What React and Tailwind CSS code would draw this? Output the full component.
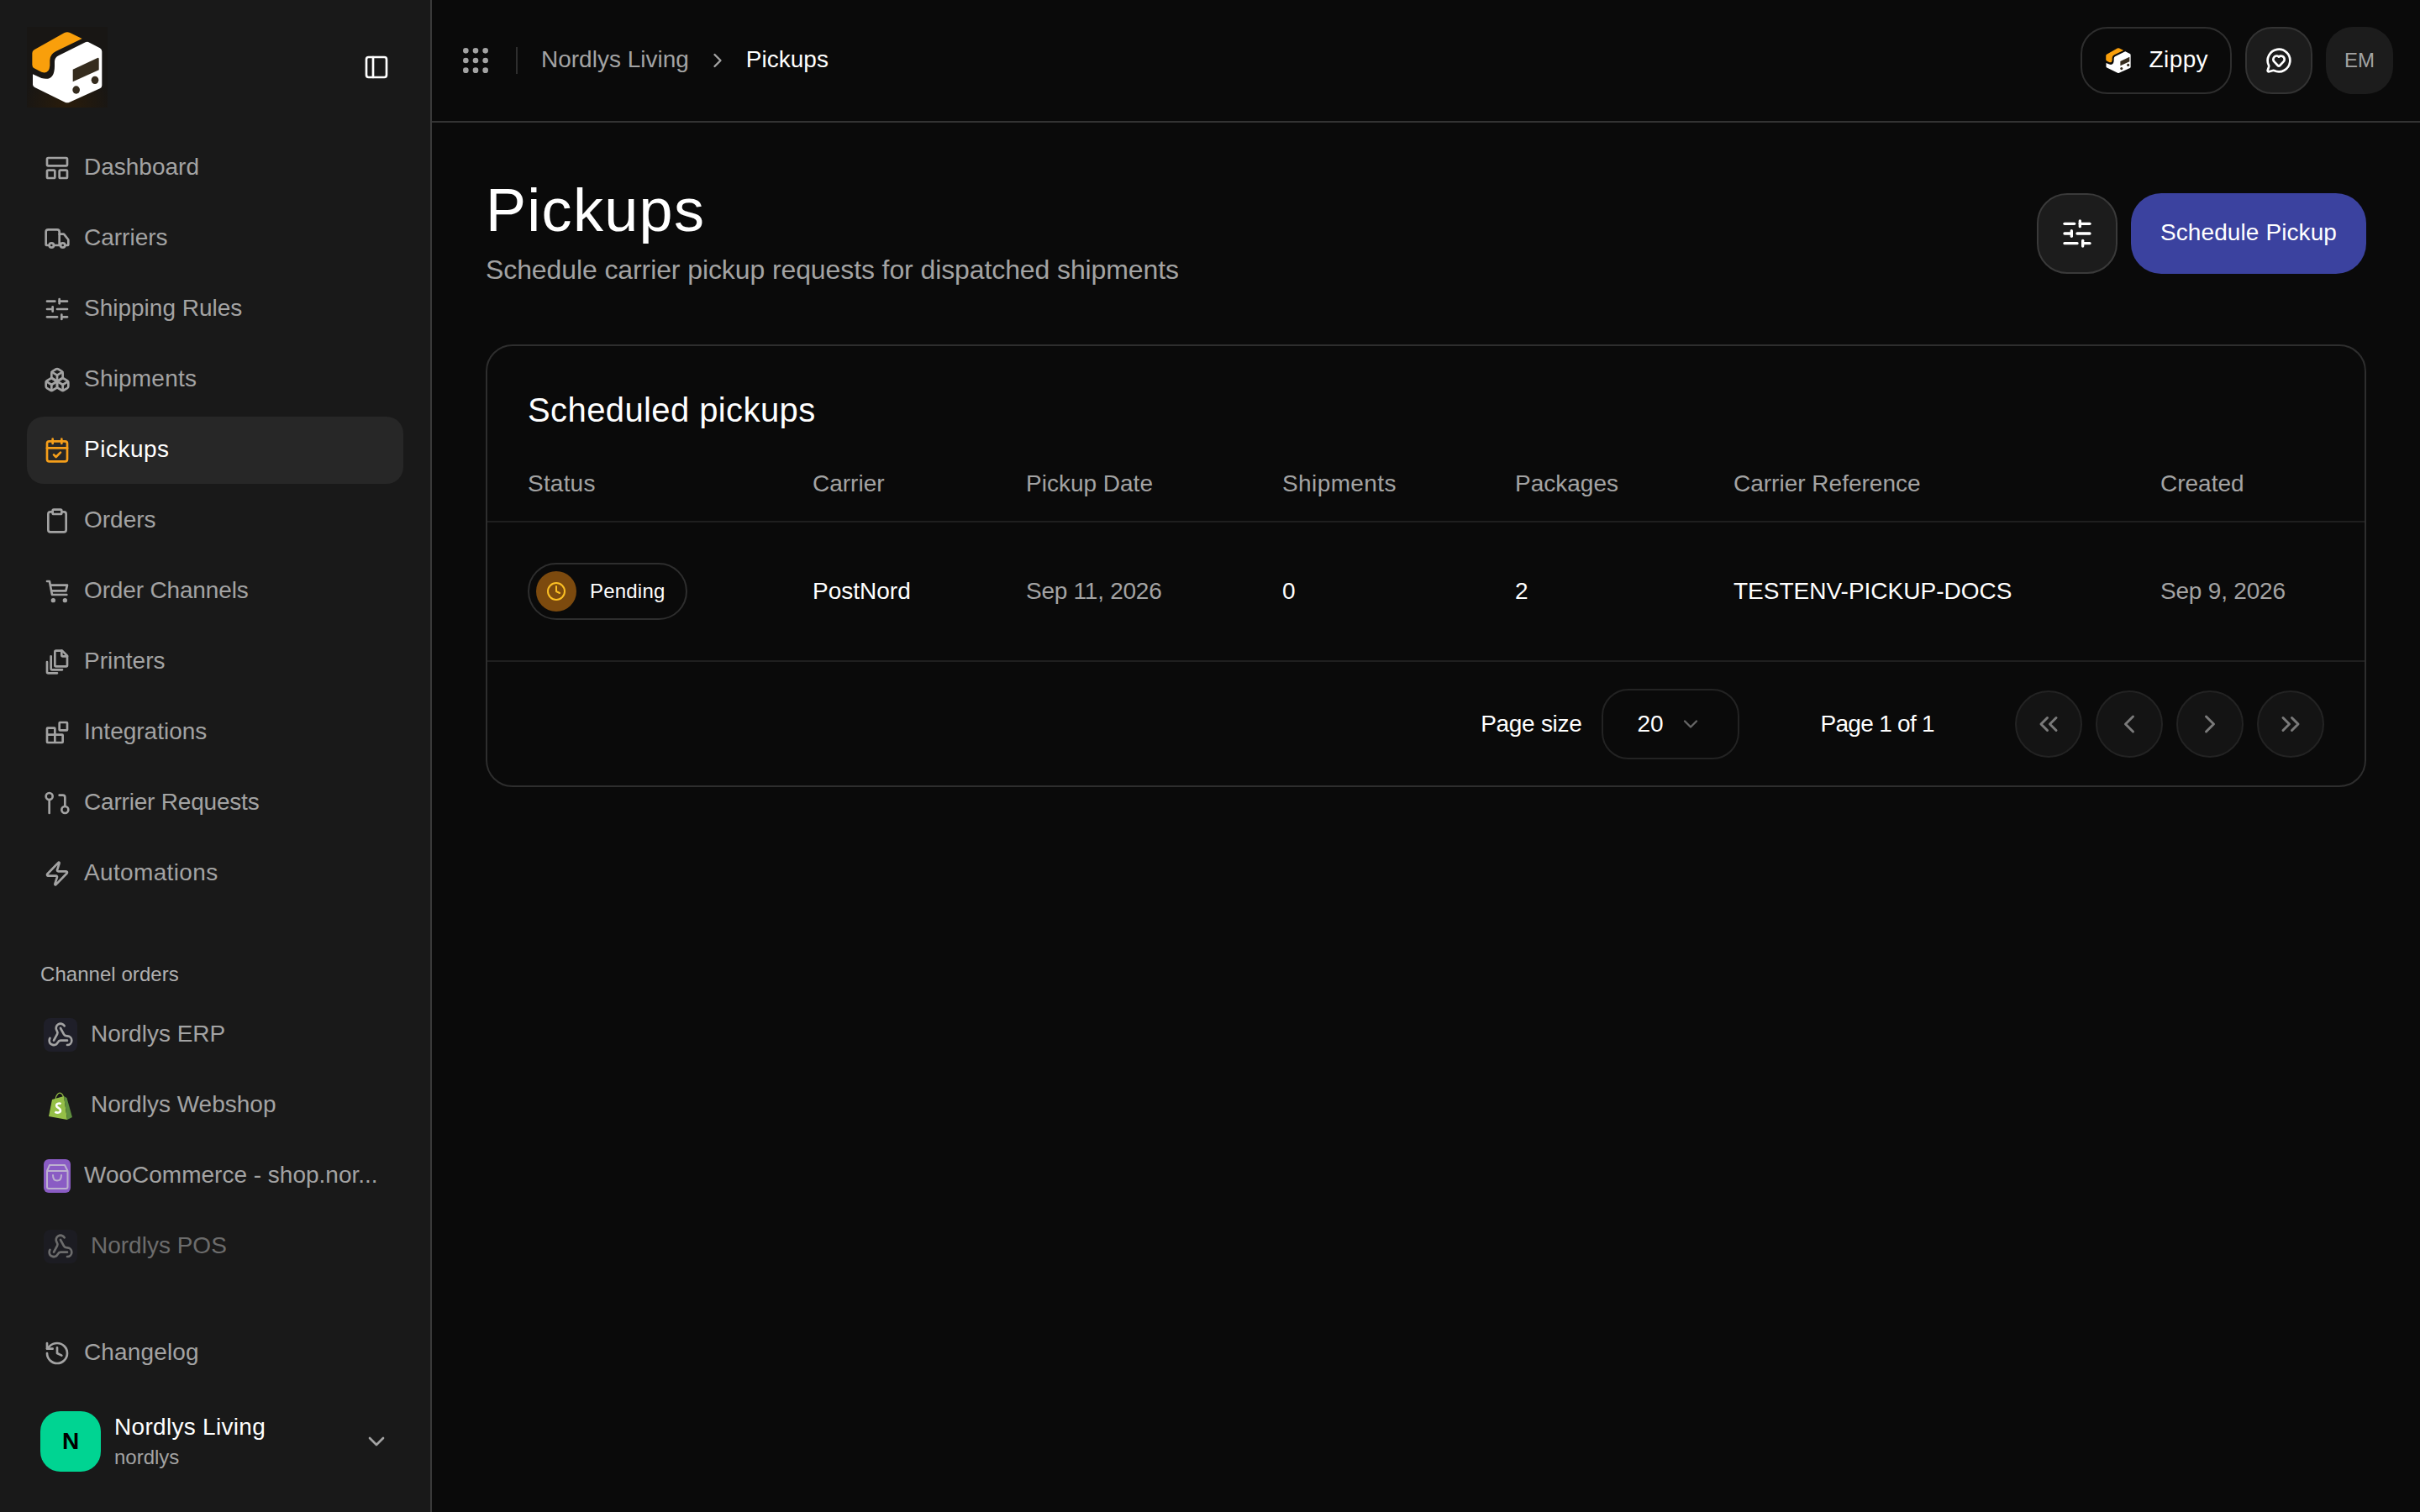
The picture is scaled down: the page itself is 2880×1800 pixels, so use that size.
import React from "react";
import {
  LayoutPanelTop, Truck, SlidersHorizontal, Boxes, CalendarCheck, Clipboard, Zap,
  History, Webhook, ChevronDown, ChevronRight, ChevronLeft, ChevronsLeft, ChevronsRight, Grip, MessageCircleHeart,
  Clock, PanelLeft,
} from "lucide-react";

function Logo({ glow, className }) {
  return (
    <svg viewBox="36 36 288 288" className={className}>
      {glow && (
        <>
          <defs>
            <radialGradient id="glow" cx="50%" cy="100%" r="55%">
              <stop offset="0%" stopColor="#2a1c0a" />
              <stop offset="100%" stopColor="#181614" />
            </radialGradient>
          </defs>
          <rect x="36" y="36" width="288" height="288" fill="url(#glow)" />
        </>
      )}
      <path d="M62 118 L170 57 Q180 52 190 57 L233 78 L140 123 Q118 134 118 155 L118 175 Q115 207 88 197 L62 184 Q55 180 55 172 L55 130 Q55 123 62 118Z" fill="#f99f0b" />
      <path d="M255 90 L297 112 Q304 116 304 124 L304 245 Q304 252 297 256 L188 305 Q180 308 172 305 L64 252 Q57 248 57 242 L57 205 L88 219 Q135 232 135 176 L135 160 Q135 145 150 138 L245 91 Q250 88 255 90Z" fill="#ffffff" />
      <path d="M200 188 L288 147 Q293 145 293 150 L293 190 L200 232Z" fill="#352c1e" />
      <ellipse cx="212" cy="261" rx="13" ry="14" fill="#352c1e" />
      <ellipse cx="279" cy="226" rx="13" ry="14" fill="#352c1e" />
    </svg>
  );
}

function Stroke({ size = 32, strokeWidth = 2, className, children }) {
  return (
    <svg width={size} height={size} viewBox="0 0 24 24" fill="none" stroke="currentColor" strokeWidth={strokeWidth} strokeLinecap="round" strokeLinejoin="round" className={className}>
      {children}
    </svg>
  );
}

function PullHook(props) {
  return (
    <Stroke {...props}>
      <circle cx="5" cy="6" r="3" />
      <path d="M5 9v12" />
      <circle cx="19" cy="18" r="3" />
      <path d="M14 5h3a2 2 0 0 1 2 2v8" />
    </Stroke>
  );
}

function Cart(props) {
  return (
    <Stroke {...props}>
      <path d="M3 3h2.2L7.5 15h13" />
      <path d="M6.3 6.5H21l-1.2 5H7.2" />
      <circle cx="8.5" cy="20" r="1" fill="currentColor" />
      <circle cx="19" cy="20" r="1" fill="currentColor" />
    </Stroke>
  );
}

function FilesIcon(props) {
  return (
    <Stroke {...props}>
      <path d="M11 2h5.5L21 6.5V15a1 1 0 0 1-1 1h-9a1 1 0 0 1-1-1V3a1 1 0 0 1 1-1z" />
      <path d="M16 2v4a1 1 0 0 0 1 1h4" />
      <path d="M6.5 7v11a1 1 0 0 0 1 1h9" />
      <path d="M3 12v9a1 1 0 0 0 1 1h8" />
    </Stroke>
  );
}

function BlocksIcon(props) {
  return (
    <Stroke {...props}>
      <rect x="14" y="3" width="7" height="7" rx="0.5" />
      <path d="M10 21V8.5a.5.5 0 0 0-.5-.5H3.5a.5.5 0 0 0-.5.5v12a.5.5 0 0 0 .5.5h13a.5.5 0 0 0 .5-.5v-6a.5.5 0 0 0-.5-.5H3" />
    </Stroke>
  );
}

function ShopifyBag() {
  return (
    <svg viewBox="0 0 28 33" className="h-[33px] w-[28px]">
      <path d="M8 9 C8.5 3.5 12 0 14.5 1.5 C17 3 17.6 6 17.6 8" fill="none" stroke="#95BF47" strokeWidth="1.3" />
      <path d="M4 9 L18 5 L22 33 L0 29 Z" fill="#95BF47" />
      <path d="M18 5 L21.5 7 L28 30 L22 33 Z" fill="#5E8E3E" />
      <path d="M14.6 14.2 C12 12.6 8.6 14 9.3 16.8 C10 19 14 19.2 14 22 C14 25 10 25.2 7.4 23.6" fill="none" stroke="#ffffff" strokeWidth="2.6" />
    </svg>
  );
}

function WooIcon() {
  return (
    <svg viewBox="0 0 32 40" className="h-[40px] w-[32px] shrink-0">
      <rect width="32" height="40" rx="6" fill="#8a5cc4" />
      <path d="M7 7 H25 L28.5 14 V33 Q28.5 35 26.5 35 H6 Q4 35 4 33 V14 Z M4 14 H28.5" fill="none" stroke="#bcb0cf" strokeWidth="2" strokeLinejoin="round" />
      <path d="M11 19 Q11 25.5 16 25.5 Q21 25.5 21 19" fill="none" stroke="#bcb0cf" strokeWidth="2" strokeLinecap="round" />
    </svg>
  );
}

const nav = [
  ["Dashboard", LayoutPanelTop, ""],
  ["Carriers", Truck, ""],
  ["Shipping Rules", SlidersHorizontal, ""],
  ["Shipments", Boxes, "tracking-[0.2px]"],
  ["Pickups", CalendarCheck, "tracking-[0.5px]", true],
  ["Orders", Clipboard, ""],
  ["Order Channels", Cart, "tracking-[-0.15px]"],
  ["Printers", FilesIcon, ""],
  ["Integrations", BlocksIcon, ""],
  ["Carrier Requests", PullHook, "tracking-[-0.2px]"],
  ["Automations", Zap, "tracking-[0.35px]"],
];

function NavItem({ label, Icon, active, track = "" }) {
  return (
    <div className={"flex h-[80px] items-center gap-[16px] rounded-[20px] px-[20px] text-[28px] " + (active ? "bg-[#272727] text-white" : "text-[#a3a3a3]")}>
      <Icon size={32} strokeWidth={2} className={"shrink-0 " + (active ? "text-[#f59e1a]" : "text-[#a3a3a3]")} />
      <span className={"mb-[2px] " + track}>{label}</span>
    </div>
  );
}

function ChannelIconBox({ children, tint }) {
  return (
    <div className={"flex h-[40px] w-[40px] shrink-0 items-center justify-center rounded-[8px] " + (tint ? "bg-[#1f1f29]" : "")}>{children}</div>
  );
}

function Sidebar() {
  return (
    <aside className="flex h-[1800px] w-[514px] shrink-0 flex-col border-r-2 border-r-[#3a3a3a] bg-[#191919]">
      <div className="flex h-[160px] shrink-0 items-start justify-between pl-[32px] pr-[48px] pt-[32px]">
        <Logo glow className="h-[96px] w-[96px]" />
        <PanelLeft size={32} strokeWidth={2} className="mt-[32px] text-white" />
      </div>
      <nav className="flex flex-col gap-[4px] px-[32px]">
        {nav.map(([label, Icon, track, active]) => (
          <NavItem key={label} label={label} Icon={Icon} active={active} track={track} />
        ))}
      </nav>
      <div className="mt-[58px] px-[48px] text-[24px] leading-[44px] tracking-[0.05px] text-[#b0b0b0]">Channel orders</div>
      <div className="mt-[10px] flex flex-col gap-[4px] px-[32px] text-[28px] text-[#a3a3a3]">
        <div className="flex h-[80px] items-center gap-[16px] px-[20px]">
          <ChannelIconBox tint><Webhook size={32} strokeWidth={2} /></ChannelIconBox>
          <span className="mb-[2px]">Nordlys ERP</span>
        </div>
        <div className="flex h-[80px] items-center gap-[16px] px-[20px]">
          <ChannelIconBox><ShopifyBag /></ChannelIconBox>
          <span className="mb-[2px]">Nordlys Webshop</span>
        </div>
        <div className="flex h-[80px] items-center gap-[16px] px-[20px]">
          <WooIcon />
          <span className="mb-[2px] truncate">WooCommerce - shop.nor...</span>
        </div>
        <div className="flex h-[80px] items-center gap-[16px] px-[20px] opacity-60">
          <ChannelIconBox tint><Webhook size={32} strokeWidth={2} /></ChannelIconBox>
          <span className="mb-[2px]">Nordlys POS</span>
        </div>
      </div>
      <div className="flex-1" />
      <div className="px-[32px]">
        <NavItem label="Changelog" Icon={History} track="tracking-[0.15px]" />
      </div>
      <div className="mb-[48px] mt-[29px] flex items-center pl-[48px] pr-[48px]">
        <div className="flex h-[72px] w-[72px] shrink-0 items-center justify-center rounded-[24px] bg-[#00d492] text-[28px] font-bold text-black">N</div>
        <div className="ml-[16px] flex-1">
          <div className="text-[28px] leading-[38px] tracking-[0.3px] text-white">Nordlys Living</div>
          <div className="text-[24px] leading-[34px] text-[#a3a3a3]">nordlys</div>
        </div>
        <ChevronDown size={32} strokeWidth={2} className="text-[#a3a3a3]" />
      </div>
    </aside>
  );
}

function TopBar() {
  return (
    <header className="flex h-[146px] shrink-0 items-center justify-between border-b-2 border-b-[#333333] px-[32px]">
      <div className="flex items-center text-[28px]">
        <Grip size={40} strokeWidth={2} className="text-[#a3a3a3]" />
        <div className="mx-[28px] h-[32px] w-[2px] bg-[#2e2e2e]" />
        <span className="mb-[2px] text-[#a3a3a3]">Nordlys Living</span>
        <ChevronRight size={28} strokeWidth={2} className="mx-[20px] text-[#a3a3a3]" />
        <span className="mb-[2px] text-white">Pickups</span>
      </div>
      <div className="flex items-center gap-[16px]">
        <div className="flex h-[80px] items-center gap-[20px] rounded-[32px] border-2 border-[#2e2e2e] bg-[#0a0a0a] px-[26px] text-[28px] text-white">
          <Logo className="h-[34px] w-[34px]" />
          <span className="mb-[2px] tracking-[0.4px]">Zippy</span>
        </div>
        <div className="flex h-[80px] w-[80px] items-center justify-center rounded-[32px] border-2 border-[#333333] bg-[#1c1c1c] text-white">
          <MessageCircleHeart size={32} strokeWidth={2} />
        </div>
        <div className="flex h-[80px] w-[80px] items-center justify-center rounded-[32px] bg-[#1c1c1c] text-[24px] text-[#a3a3a3]">EM</div>
      </div>
    </header>
  );
}

const rowGrid = "grid grid-cols-[387px_254px_305px_277px_260px_508px_1fr] items-center text-[28px]";

function PageButton({ Icon }) {
  return (
    <div className="flex h-[80px] w-[80px] items-center justify-center rounded-full border-2 border-[#232323] bg-[#141414] text-[#7a7a7a]">
      <Icon size={36} strokeWidth={2} />
    </div>
  );
}

function Card() {
  return (
    <section className="h-[527px] rounded-[32px] border-2 border-[#2e2e2e]">
      <h2 className="pl-[48px] pt-[48px] text-[40px] font-normal leading-[56px] tracking-[0.4px] text-white">Scheduled pickups</h2>
      <div className={rowGrid + " mt-[14px] h-[92px] border-b-2 border-b-[#1f1f1f] pt-[1px] text-[#a3a3a3]"}>
        <div className="pl-[48px] tracking-[0.2px]">Status</div>
        <div>Carrier</div>
        <div>Pickup Date</div>
        <div className="tracking-[0.4px]">Shipments</div>
        <div>Packages</div>
        <div>Carrier Reference</div>
        <div>Created</div>
      </div>
      <div className={rowGrid + " h-[166px] border-b-2 border-b-[#1f1f1f] pb-[1px] text-white"}>
        <div className="pl-[48px]">
          <div className="inline-flex h-[68px] w-[190px] items-center rounded-full border-2 border-[#2e2e2e] pl-[8px]">
            <div className="flex h-[48px] w-[48px] items-center justify-center rounded-full bg-[#7c4a0e] text-[#fbbf24]">
              <Clock size={24} strokeWidth={2} />
            </div>
            <span className="ml-[16px] text-[24px] tracking-[0.2px] text-white">Pending</span>
          </div>
        </div>
        <div>PostNord</div>
        <div className="tracking-[-0.25px] text-[#a3a3a3]">Sep 11, 2026</div>
        <div>0</div>
        <div>2</div>
        <div>TESTENV-PICKUP-DOCS</div>
        <div className="tracking-[-0.2px] text-[#a3a3a3]">Sep 9, 2026</div>
      </div>
      <div className="flex h-[147px] items-center justify-end pr-[48px] text-[28px] text-white">
        <span className="tracking-[-0.3px]">Page size</span>
        <div className="ml-[24px] flex h-[84px] w-[164px] items-center gap-[18px] rounded-[32px] border-2 border-[#232323] pl-[40px]">
          <span>20</span>
          <ChevronDown size={28} strokeWidth={2} className="text-[#666666]" />
        </div>
        <span className="ml-[96px] tracking-[-0.7px]">Page 1 of 1</span>
        <div className="ml-[96px] flex gap-[16px]">
          <PageButton Icon={ChevronsLeft} />
          <PageButton Icon={ChevronLeft} />
          <PageButton Icon={ChevronRight} />
          <PageButton Icon={ChevronsRight} />
        </div>
      </div>
    </section>
  );
}

export default function App() {
  return (
    <div className="flex h-[1800px] w-[2880px] overflow-hidden bg-[#0a0a0a] font-['Liberation_Sans',Arial,sans-serif]">
      <Sidebar />
      <main className="flex min-w-0 flex-1 flex-col">
        <TopBar />
        <div className="px-[64px] pt-[64px]">
          <div className="mb-[64px] flex items-center justify-between">
            <div>
              <h1 className="text-[72px] font-normal leading-[80px] tracking-[1.3px] text-white">Pickups</h1>
              <p className="mt-[7px] pb-[1px] text-[32px] leading-[48px] tracking-[-0.1px] text-[#a3a3a3]">Schedule carrier pickup requests for dispatched shipments</p>
            </div>
            <div className="flex items-center gap-[16px]">
              <div className="flex h-[96px] w-[96px] items-center justify-center rounded-[36px] border-2 border-[#3a3a3a] bg-[#1c1c1c] text-white">
                <SlidersHorizontal size={40} strokeWidth={2} />
              </div>
              <div className="flex h-[96px] w-[280px] items-center justify-center rounded-[36px] bg-[#3b429f] pb-[2px] text-[28px] tracking-[0.1px] text-white">Schedule Pickup</div>
            </div>
          </div>
          <Card />
        </div>
      </main>
    </div>
  );
}
